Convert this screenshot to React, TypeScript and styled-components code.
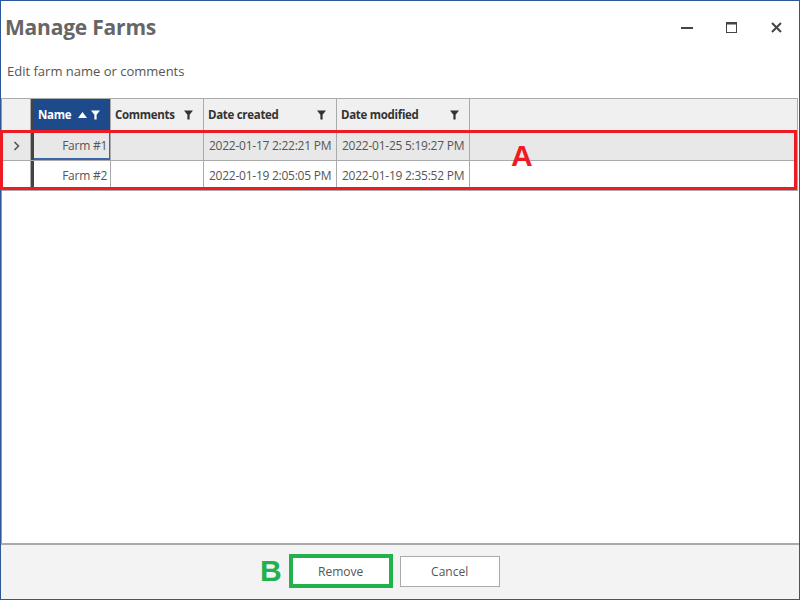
import styled, { createGlobalStyle } from "styled-components";

const GlobalStyle = createGlobalStyle`
  html, body { margin: 0; padding: 0; background: #fff; }
  body { font-family: "Open Sans", "Noto Sans", sans-serif; }
  * { box-sizing: border-box; }
`;

const Window = styled.div`
  width: 800px;
  height: 600px;
  border: 1px solid #2b579a;
  display: flex;
  flex-direction: column;
  background: #fff;
  position: relative;
`;

const TitleBar = styled.div`
  height: 52px;
  display: flex;
  align-items: center;
  padding-left: 4px;
`;

const Title = styled.h1`
  margin: 0;
  font-size: 21px;
  font-weight: 700;
  color: #666;
  flex: 1;
  letter-spacing: -0.2px;
`;

const Controls = styled.div`
  display: flex;
  align-items: center;
`;

const ControlButton = styled.div`
  width: 45px;
  height: 30px;
  display: flex;
  align-items: center;
  justify-content: center;
  color: #444;
`;

const Subtitle = styled.div`
  padding: 9px 0 0 6px;
  height: 45px;
  font-size: 13px;
  color: #555;
`;

const GridArea = styled.div`
  flex: 1;
  border-top: 1px solid #aaa;
  border-left: 1px solid #999;
  margin-right: 1px;
  position: relative;
  background: #fff;
`;

const Row = styled.div<{ $bg: string; $h: number }>`
  display: grid;
  grid-template-columns: 29px 80px 93px 133px 133px 1fr;
  height: ${(p) => p.$h}px;
  background: ${(p) => p.$bg};
  border-bottom: 1px solid #aaa;
`;

const Cell = styled.div<{ $align?: string; $name?: boolean; $focus?: boolean }>`
  display: flex;
  align-items: center;
  justify-content: ${(p) => p.$align || "flex-start"};
  padding: 0 ${(p) => (p.$align === "flex-end" ? "3px" : "5px")};
  border-right: 1px solid #aaa;
  border-left: ${(p) => (p.$name ? "3px solid #444" : "none")};
  font-size: 12px;
  letter-spacing: -0.25px;
  color: #555;
  white-space: nowrap;
  overflow: hidden;
  ${(p) => (p.$focus ? "box-shadow: inset -1px -2px 0 #3a66a8;" : "")}
`;

const HeadCell = styled(Cell)<{ $active?: boolean }>`
  background: ${(p) => (p.$active ? "#1c4a8a" : "transparent")};
  color: ${(p) => (p.$active ? "#fff" : "#333")};
  font-weight: 700;
  font-size: 11.5px;
  letter-spacing: -0.3px;
  justify-content: space-between;
  padding: 0 10px 0 4px;
`;

const HeadLabel = styled.span`
  display: flex;
  align-items: center;
  gap: 7px;
`;

const Indicator = styled.div`
  display: flex;
  align-items: center;
  justify-content: center;
  border-right: 1px solid #aaa;
  color: #555;
`;

const Footer = styled.div`
  height: 56px;
  border-top: 2px solid #aaa;
  background: #f3f3f3;
  display: flex;
  align-items: center;
  padding-left: 259px;
  padding-bottom: 2px;
`;

const Button = styled.button`
  width: 100px;
  height: 31px;
  background: #fff;
  border: 1px solid #aaa;
  font-family: "Open Sans", "Noto Sans", sans-serif;
  font-size: 12px;
  color: #555;
  padding: 0;
`;

const Highlight = styled.div`
  border: 4px solid #22b14c;
  display: flex;
  margin-left: 7px;
  margin-right: 7px;
  & > button {
    width: 96px;
    height: 26px;
    border: none;
  }
`;

const Mark = styled.span<{ $color: string; $size: number }>`
  font-family: "Liberation Sans", Arial, sans-serif;
  font-weight: 700;
  font-size: ${(p) => p.$size}px;
  color: ${(p) => p.$color};
  line-height: 1;
`;

const RowsWrap = styled.div`
  position: relative;
`;

const RedBox = styled.div`
  position: absolute;
  left: -2px;
  top: -1px;
  right: 1px;
  bottom: 1px;
  border: 3px solid #ed1c24;
  pointer-events: none;
`;

const LabelA = styled(Mark)`
  position: absolute;
  left: 509px;
  top: 10px;
`;

const Funnel = ({ color = "#333" }: { color?: string }) => (
  <svg width="9" height="10" viewBox="0 0 9 10">
    <path d="M0 0.5 H9 L5.6 4.8 V9.5 H3.4 V4.8 Z" fill={color} />
  </svg>
);

const SortUp = () => (
  <svg width="9" height="6" viewBox="0 0 9 6">
    <path d="M4.5 0 L9 6 H0 Z" fill="#fff" />
  </svg>
);

const rows = [
  { name: "Farm #1", created: "2022-01-17 2:22:21 PM", modified: "2022-01-25 5:19:27 PM", selected: true },
  { name: "Farm #2", created: "2022-01-19 2:05:05 PM", modified: "2022-01-19 2:35:52 PM", selected: false },
];

export default function App() {
  return (
    <>
      <GlobalStyle />
      <Window>
        <TitleBar>
          <Title>Manage Farms</Title>
          <Controls>
            <ControlButton>
              <svg width="12" height="12" viewBox="0 0 12 12">
                <rect x="0" y="6" width="12" height="2" fill="#444" />
              </svg>
            </ControlButton>
            <ControlButton>
              <svg width="11" height="11" viewBox="0 0 11 11">
                <rect x="0.5" y="0.5" width="10" height="10" fill="none" stroke="#444" />
                <rect x="0" y="0" width="11" height="2.5" fill="#444" />
              </svg>
            </ControlButton>
            <ControlButton>
              <svg width="11" height="11" viewBox="0 0 11 11">
                <path d="M1 1 L10 10 M10 1 L1 10" stroke="#444" strokeWidth="2" />
              </svg>
            </ControlButton>
          </Controls>
        </TitleBar>
        <Subtitle>Edit farm name or comments</Subtitle>
        <GridArea>
          <Row $bg="#f0f0f0" $h={32}>
            <Indicator />
            <HeadCell $name $active>
              <HeadLabel>
                Name <SortUp />
              </HeadLabel>
              <Funnel color="#fff" />
            </HeadCell>
            <HeadCell>
              Comments <Funnel />
            </HeadCell>
            <HeadCell>
              Date created <Funnel />
            </HeadCell>
            <HeadCell>
              Date modified <Funnel />
            </HeadCell>
            <HeadCell />
          </Row>
          <RowsWrap>
            {rows.map((r) => (
              <Row key={r.name} $bg={r.selected ? "#e8e8e8" : "#fff"} $h={30}>
                <Indicator>
                  {r.selected && (
                    <svg width="7" height="10" viewBox="0 0 7 10">
                      <path d="M1.5 1 L5.5 5 L1.5 9" fill="none" stroke="#555" strokeWidth="1.6" />
                    </svg>
                  )}
                </Indicator>
                <Cell $name $align="flex-end" $focus={r.selected}>
                  {r.name}
                </Cell>
                <Cell />
                <Cell>{r.created}</Cell>
                <Cell>{r.modified}</Cell>
                <Cell />
              </Row>
            ))}
            <RedBox />
            <LabelA $color="#ed1c24" $size={30}>
              A
            </LabelA>
          </RowsWrap>
        </GridArea>
        <Footer>
          <Mark $color="#22b14c" $size={30}>
            B
          </Mark>
          <Highlight>
            <Button>Remove</Button>
          </Highlight>
          <Button>Cancel</Button>
        </Footer>
      </Window>
    </>
  );
}
